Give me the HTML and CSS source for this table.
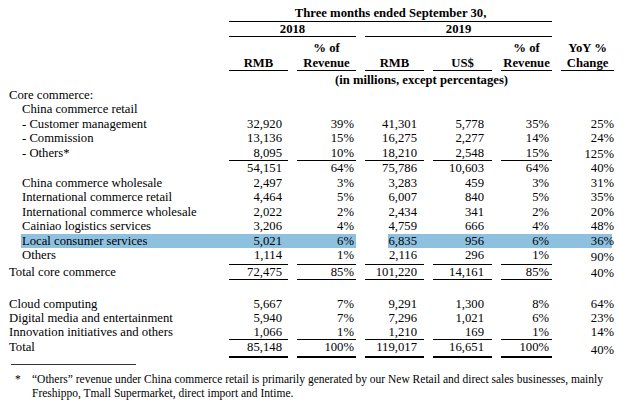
FILE: index.html
```html
<!DOCTYPE html>
<html lang="en">
<head>
<meta charset="utf-8">
<title>Revenue</title>
<link rel="stylesheet" href="styles.css">
</head>
<body>
<div class="page">
<table class="rev">
  <colgroup>
    <col class="c-label"><col class="c-w"><col class="c-w"><col class="c-w"><col class="c-w"><col class="c-p"><col class="c-y">
  </colgroup>
  <thead>
    <tr class="h1"><th></th><th colspan="5" class="hd rule">Three months ended September 30,</th><th></th></tr>
    <tr class="h2"><th></th><th colspan="2" class="hd rule">2018</th><th colspan="3" class="hd rule">2019</th><th></th></tr>
    <tr class="h3"><th></th><th class="hd rule">RMB</th><th class="hd rule">% of<br>Revenue</th><th class="hd rule">RMB</th><th class="hd rule">US$</th><th class="hd rule">% of<br>Revenue</th><th class="hd rule">YoY %<br>Change</th></tr>
    <tr class="h4"><th></th><th colspan="6" class="hd">(in millions, except percentages)</th></tr>
  </thead>
  <tbody>
    <tr><td class="lbl">Core commerce:</td><td></td><td></td><td></td><td></td><td></td><td></td></tr>
    <tr><td class="lbl in">China commerce retail</td><td></td><td></td><td></td><td></td><td></td><td></td></tr>
    <tr><td class="lbl in">- Customer management</td><td class="n a">32,920</td><td class="n b">39%</td><td class="n c">41,301</td><td class="n d">5,778</td><td class="n e">35%</td><td class="y">25%</td></tr>
    <tr><td class="lbl in">- Commission</td><td class="n a">13,136</td><td class="n b">15%</td><td class="n c">16,275</td><td class="n d">2,277</td><td class="n e">14%</td><td class="y">24%</td></tr>
    <tr class="ul"><td class="lbl in">- Others*</td><td class="n a">8,095</td><td class="n b">10%</td><td class="n c">18,210</td><td class="n d">2,548</td><td class="n e">15%</td><td class="y">125%</td></tr>
    <tr><td class="lbl in"></td><td class="n a">54,151</td><td class="n b">64%</td><td class="n c">75,786</td><td class="n d">10,603</td><td class="n e">64%</td><td class="y">40%</td></tr>
    <tr><td class="lbl in">China commerce wholesale</td><td class="n a">2,497</td><td class="n b">3%</td><td class="n c">3,283</td><td class="n d">459</td><td class="n e">3%</td><td class="y">31%</td></tr>
    <tr><td class="lbl in">International commerce retail</td><td class="n a">4,464</td><td class="n b">5%</td><td class="n c">6,007</td><td class="n d">840</td><td class="n e">5%</td><td class="y">35%</td></tr>
    <tr><td class="lbl in">International commerce wholesale</td><td class="n a">2,022</td><td class="n b">2%</td><td class="n c">2,434</td><td class="n d">341</td><td class="n e">2%</td><td class="y">20%</td></tr>
    <tr><td class="lbl in">Cainiao logistics services</td><td class="n a">3,206</td><td class="n b">4%</td><td class="n c">4,759</td><td class="n d">666</td><td class="n e">4%</td><td class="y">48%</td></tr>
    <tr class="hl"><td class="lbl in">Local consumer services</td><td class="n a">5,021</td><td class="n b">6%</td><td class="n c">6,835</td><td class="n d">956</td><td class="n e">6%</td><td class="y">36%</td></tr>
    <tr class="ul"><td class="lbl in">Others</td><td class="n a">1,114</td><td class="n b">1%</td><td class="n c">2,116</td><td class="n d">296</td><td class="n e">1%</td><td class="y low">90%</td></tr>
    <tr class="ul"><td class="lbl">Total core commerce</td><td class="n a">72,475</td><td class="n b">85%</td><td class="n c">101,220</td><td class="n d">14,161</td><td class="n e">85%</td><td class="y">40%</td></tr>
    <tr class="gap"><td colspan="7"></td></tr>
    <tr class="tight"><td class="lbl">Cloud computing</td><td class="n a">5,667</td><td class="n b">7%</td><td class="n c">9,291</td><td class="n d">1,300</td><td class="n e">8%</td><td class="y">64%</td></tr>
    <tr class="tight"><td class="lbl">Digital media and entertainment</td><td class="n a">5,940</td><td class="n b">7%</td><td class="n c">7,296</td><td class="n d">1,021</td><td class="n e">6%</td><td class="y">23%</td></tr>
    <tr class="ul tight"><td class="lbl">Innovation initiatives and others</td><td class="n a">1,066</td><td class="n b">1%</td><td class="n c">1,210</td><td class="n d">169</td><td class="n e">1%</td><td class="y vt">14%</td></tr>
    <tr class="dbl"><td class="lbl">Total</td><td class="n a">85,148</td><td class="n b">100%</td><td class="n c">119,017</td><td class="n d">16,651</td><td class="n e">100%</td><td class="y">40%</td></tr>
  </tbody>
</table>
<div class="sep"></div>
<div class="note">
  <span class="star">*</span>
  <p class="note-text">“Others” revenue under China commerce retail is primarily generated by our New Retail and direct sales businesses, mainly Freshippo, Tmall Supermarket, direct import and Intime.</p>
</div>
</div>
</body>
</html>
```

FILE: styles.css
```css
html, body {
  margin: 0;
  padding: 0;
  background: #ffffff;
}

body {
  font-family: "Liberation Serif", "Times New Roman", serif;
  font-size: 12.7px;
  line-height: 14.5px;
  color: #000000;
}

.page {
  padding-top: 6px;
  width: 630px;
}

.rev {
  border-collapse: separate;
  border-spacing: 9px 0;
  table-layout: fixed;
  width: 623px;
}

.c-label { width: 211px; }
.c-w { width: 59px; }
.c-p { width: 51px; }
.c-y { width: 53px; }

.rev th,
.rev td {
  padding: 0;
  white-space: nowrap;
}

.hd {
  font-weight: bold;
  text-align: center;
  vertical-align: bottom;
}

.rule {
  border-bottom: 1px solid #000;
}

.h3 th {
  padding-top: 4px;
}

.h4 th {
  padding-top: 2px;
}

.lbl {
  padding-left: 4px;
  text-align: left;
  vertical-align: top;
}

.lbl.in {
  padding-left: 13px;
}

.n {
  text-align: right;
  vertical-align: top;
}

.n.a { padding-right: 6px; }
.n.b { padding-right: 2px; }
.n.c { padding-right: 7px; }
.n.d { padding-right: 8px; }
.n.e { padding-right: 3px; }

.y {
  text-align: right;
  padding-right: 6px;
  vertical-align: bottom;
}

.y.vt {
  vertical-align: top;
}

.y.low {
  padding-top: 2px;
}

.ul .n {
  border-bottom: 1px solid #000;
}

.tight td {
  line-height: 14px;
}

.dbl .n {
  border-bottom: 2px solid #000;
}

.dbl .y {
  padding-top: 3px;
}

.gap td {
  height: 17px;
}

/* highlighted row */
.hl .lbl {
  background: linear-gradient(to right, transparent 12px, #8ec1e0 12px);
  box-shadow: 9px 0 0 #8ec1e0;
}

.hl .n.a {
  background: #8ec1e0;
  box-shadow: 9px 0 0 #8ec1e0;
}

.hl .n.b {
  background: #8ec1e0;
}

.hl .n.c {
  background: linear-gradient(to right, transparent 23px, #8ec1e0 23px);
  box-shadow: 9px 0 0 #8ec1e0;
}

.hl .n.d {
  background: #8ec1e0;
  box-shadow: 9px 0 0 #8ec1e0;
}

.hl .n.e {
  background: #8ec1e0;
  box-shadow: 9px 0 0 #8ec1e0;
}

.hl .y {
  background: linear-gradient(to right, #8ec1e0 51px, transparent 51px);
}

.sep {
  margin-top: 6px;
  margin-left: 11px;
  width: 125px;
  border-top: 1px solid #333;
}

.note {
  display: flex;
  margin-top: 7px;
  font-size: 11.5px;
  line-height: 14px;
}

.star {
  width: 17px;
  margin-left: 15px;
  flex: none;
}

.note-text {
  margin: 0;
  width: 590px;
}
```
